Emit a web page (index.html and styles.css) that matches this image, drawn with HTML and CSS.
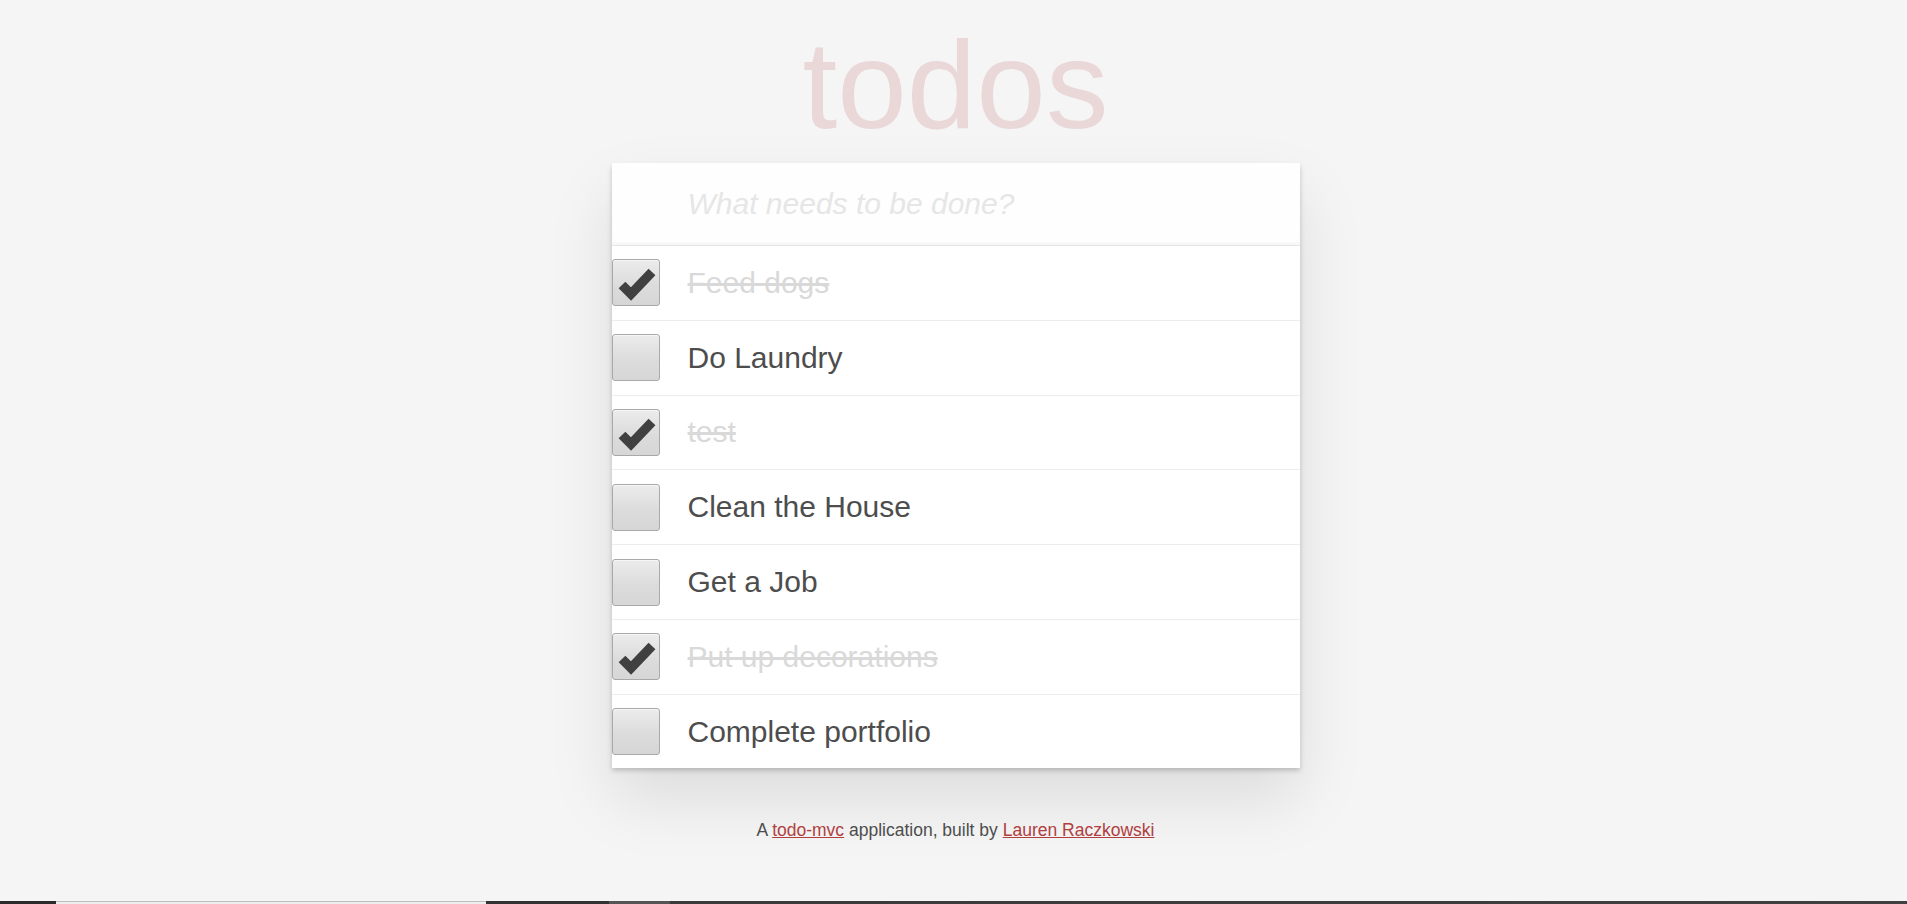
FILE: index.html
```html
<!DOCTYPE html>
<html lang="en">
<head>
<meta charset="utf-8">
<title>todos</title>
<link rel="stylesheet" href="styles.css">
</head>
<body>
<div class="page">
  <header class="header">
    <h1 class="title">todos</h1>
  </header>
  <section class="todoapp">
    <input class="new-todo" type="text" placeholder="What needs to be done?">
    <ul class="todo-list">
      <li class="todo completed">
        <span class="toggle"><svg viewBox="0 0 48 47" width="48" height="47"><polyline points="10,26 19,35 40,13" /></svg></span>
        <label class="todo-label">Feed dogs</label>
      </li>
      <li class="todo">
        <span class="toggle"></span>
        <label class="todo-label">Do Laundry</label>
      </li>
      <li class="todo completed">
        <span class="toggle"><svg viewBox="0 0 48 47" width="48" height="47"><polyline points="10,26 19,35 40,13" /></svg></span>
        <label class="todo-label">test</label>
      </li>
      <li class="todo">
        <span class="toggle"></span>
        <label class="todo-label">Clean the House</label>
      </li>
      <li class="todo">
        <span class="toggle"></span>
        <label class="todo-label">Get a Job</label>
      </li>
      <li class="todo completed">
        <span class="toggle"><svg viewBox="0 0 48 47" width="48" height="47"><polyline points="10,26 19,35 40,13" /></svg></span>
        <label class="todo-label">Put up decorations</label>
      </li>
      <li class="todo">
        <span class="toggle"></span>
        <label class="todo-label">Complete portfolio</label>
      </li>
    </ul>
  </section>
  <footer class="info">
    <p>A <a href="#">todo-mvc</a> application, built by <a href="#">Lauren Raczkowski</a></p>
  </footer>
</div>
<div class="taskbar">
  <span class="seg seg-dark1"></span>
  <span class="seg seg-light"></span>
  <span class="seg seg-dark2"></span>
  <span class="seg seg-gray"></span>
  <span class="seg seg-rest"></span>
</div>
</body>
</html>
```

FILE: styles.css
```css
html, body {
  margin: 0;
  padding: 0;
}

body {
  background: #f5f5f5;
  color: #4d4d4d;
  font-family: "Liberation Sans", Arial, sans-serif;
  font-size: 17.5px;
  line-height: 24.5px;
  min-height: 904px;
}

.page {
  width: 688px;
  margin-left: calc(50% - 342px);
}

.header {
  padding-top: 22px;
}

.title {
  margin: 0 0 16px 0;
  height: 125px;
  font-size: 125px;
  line-height: 125px;
  font-weight: normal;
  text-align: center;
  color: rgba(175, 47, 47, 0.15);
}

.todoapp {
  background: #fff;
  margin: 0 0 50px 0;
  box-shadow: 0 2.5px 5px 0 rgba(0, 0, 0, 0.2), 0 31px 62px 0 rgba(0, 0, 0, 0.1);
}

.new-todo {
  display: block;
  width: 100%;
  box-sizing: border-box;
  margin: 0;
  padding: 20px 20px 20px 76px;
  height: 82px;
  border: none;
  outline: none;
  background: rgba(0, 0, 0, 0.003);
  box-shadow: inset 0 -2.5px 1.25px rgba(0, 0, 0, 0.03);
  font-family: "Liberation Sans", Arial, sans-serif;
  font-size: 30px;
  line-height: 42px;
  color: #4d4d4d;
}

.new-todo::placeholder {
  font-style: italic;
  color: #e6e6e6;
}

.todo-list {
  list-style: none;
  margin: 0;
  padding: 0;
  border-top: 1.25px solid #e6e6e6;
}

.todo {
  display: flex;
  align-items: center;
  font-size: 30px;
  border-bottom: 1.25px solid #ededed;
}

.todo:last-child {
  border-bottom: none;
}

.toggle {
  flex: none;
  box-sizing: border-box;
  width: 48px;
  height: 47px;
  border: 1px solid #a9a9a9;
  border-radius: 3px;
  background: linear-gradient(#ececec, #dcdcdc 55%, #d6d6d6);
  box-shadow: inset 0 1px 0 #f6f6f6;
  position: relative;
}

.toggle svg {
  position: absolute;
  left: -1px;
  top: -1px;
}

.toggle polyline {
  fill: none;
  stroke: #404040;
  stroke-width: 9.5;
  stroke-linejoin: miter;
  stroke-linecap: butt;
}

.todo-label {
  display: block;
  flex: 1;
  padding: 18.9px 18.75px 18.9px 28px;
  line-height: 1.2;
  word-break: break-all;
}

.completed .todo-label {
  color: #d9d9d9;
  text-decoration: line-through;
}

.info {
  text-align: center;
}

.info p {
  margin: 0;
}

.info a {
  color: #b04040;
}

.taskbar {
  position: fixed;
  left: 0;
  right: 0;
  bottom: 0;
  height: 3px;
  display: flex;
}

.seg {
  display: block;
  height: 3px;
}

.seg-dark1 {
  width: 56px;
  background: #2a2a2a;
}

.seg-light {
  width: 430px;
  box-sizing: border-box;
  border-top: 1px solid #bdbdbd;
  background: #eeeeee;
}

.seg-dark2 {
  width: 123px;
  background: #333333;
}

.seg-gray {
  width: 61px;
  background: #555555;
}

.seg-rest {
  flex: 1;
  background: linear-gradient(to right, #3a3a3a, #404040);
}
```
